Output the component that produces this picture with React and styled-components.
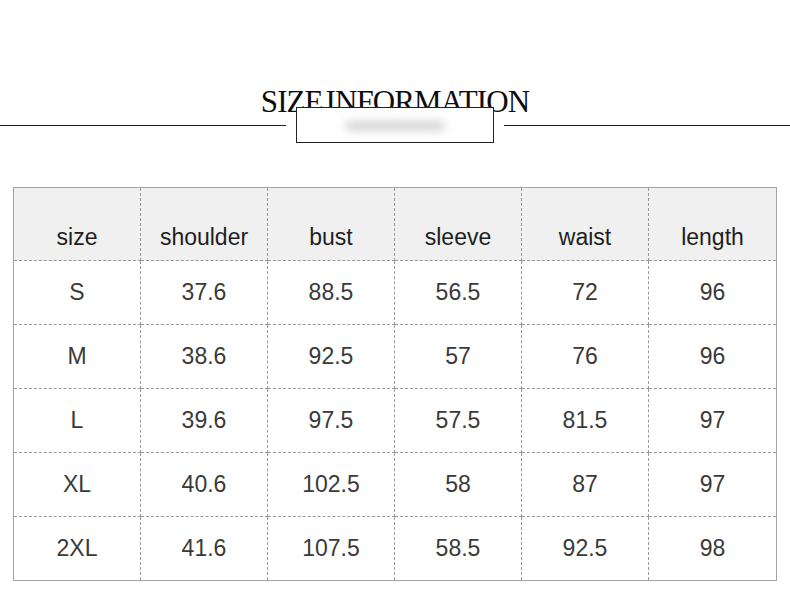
import React from "react";
import styled, { createGlobalStyle } from "styled-components";

const GlobalStyle = createGlobalStyle`
	html, body {
		margin: 0;
		padding: 0;
		background: #fff;
	}
	body {
		width: 790px;
		height: 610px;
		overflow: hidden;
		font-family: "Liberation Sans", Arial, sans-serif;
	}
`;

const Page = styled.div`
	width: 790px;
	padding-top: 87px;
`;

const Title = styled.h1`
	margin: 0;
	text-align: center;
	font-family: "Liberation Serif", "Times New Roman", serif;
	font-weight: normal;
	font-size: 31px;
	line-height: 30px;
	letter-spacing: -0.9px;
	word-spacing: -4px;
	color: #0d0d0d;
`;

const Divider = styled.div`
	display: flex;
	align-items: center;
	gap: 10px;
	margin-top: -10px;
`;

const Rule = styled.div`
	flex: 1;
	height: 1px;
	background: #222;
`;

const Label = styled.div`
	position: relative;
	width: 196px;
	height: 34px;
	border: 1px solid #222;
	background: #fff;
	display: flex;
	align-items: center;
	justify-content: center;
`;

const Smudge = styled.div`
	width: 100px;
	height: 10px;
	margin-top: 2px;
	border-radius: 5px;
	background: #d6d6d6;
	filter: blur(4px);
`;

const Table = styled.div`
	margin: 44px 0 0 13px;
	width: 762px;
	border: 1px solid #a3a3a3;
	display: grid;
	grid-template-columns: repeat(6, 1fr);
`;

const Cell = styled.div`
	display: flex;
	justify-content: center;
	align-items: ${(p) => (p.$head ? "flex-end" : "center")};
	padding-bottom: ${(p) => (p.$head ? "11px" : "0")};
	box-sizing: border-box;
	background: ${(p) => (p.$head ? "#f0f0f0" : "#fff")};
	color: ${(p) => (p.$head ? "#1e1e1e" : "#3a3a3a")};
	font-size: 23px;
	line-height: 23px;
	border-right: ${(p) => (p.$lastCol ? "none" : "1px dashed #9a9a9a")};
	border-bottom: ${(p) => (p.$lastRow ? "none" : "1px dashed #9a9a9a")};
	height: ${(p) => (p.$head ? "73px" : p.$lastRow ? "63px" : "64px")};
`;

const head = ["size", "shoulder", "bust", "sleeve", "waist", "length"];
const rows = [
	["S", "37.6", "88.5", "56.5", "72", "96"],
	["M", "38.6", "92.5", "57", "76", "96"],
	["L", "39.6", "97.5", "57.5", "81.5", "97"],
	["XL", "40.6", "102.5", "58", "87", "97"],
	["2XL", "41.6", "107.5", "58.5", "92.5", "98"],
];

export default function App() {
	return (
		<>
			<GlobalStyle />
			<Page>
				<Title>SIZE INFORMATION</Title>
				<Divider>
					<Rule />
					<Label>
						<Smudge />
					</Label>
					<Rule />
				</Divider>
				<Table>
					{head.map((h, i) => (
						<Cell key={h} $head $lastCol={i === 5}>
							{h}
						</Cell>
					))}
					{rows.map((r, ri) =>
						r.map((v, ci) => (
							<Cell
								key={ri + "-" + ci}
								$lastCol={ci === 5}
								$lastRow={ri === rows.length - 1}>
								{v}
							</Cell>
						))
					)}
				</Table>
			</Page>
		</>
	);
}
